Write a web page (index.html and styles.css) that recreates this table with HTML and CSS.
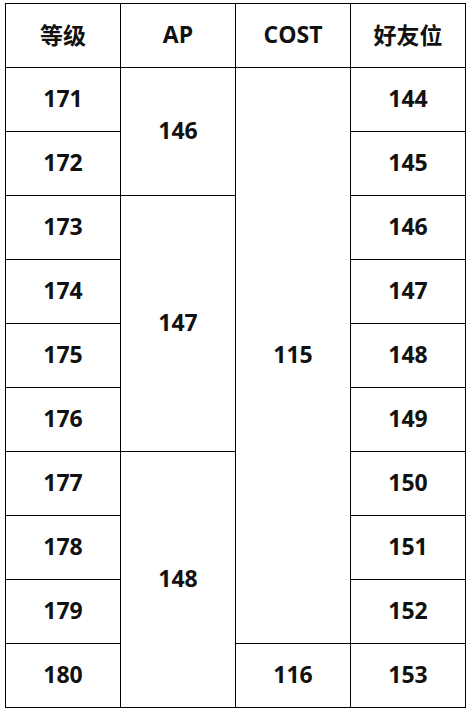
FILE: index.html
```html
<!DOCTYPE html>
<html lang="zh">
<head>
<meta charset="utf-8">
<title>等级表</title>
<link rel="stylesheet" href="styles.css">
</head>
<body>
<table class="grid">
  <colgroup><col class="c"><col class="c"><col class="c"><col class="c"></colgroup>
  <thead>
    <tr><th>等级</th><th>AP</th><th>COST</th><th>好友位</th></tr>
  </thead>
  <tbody>
    <tr><td>171</td><td rowspan="2">146</td><td rowspan="9">115</td><td>144</td></tr>
    <tr><td>172</td><td>145</td></tr>
    <tr><td>173</td><td rowspan="4">147</td><td>146</td></tr>
    <tr><td>174</td><td>147</td></tr>
    <tr><td>175</td><td>148</td></tr>
    <tr><td>176</td><td>149</td></tr>
    <tr><td>177</td><td rowspan="4">148</td><td>150</td></tr>
    <tr><td>178</td><td>151</td></tr>
    <tr><td>179</td><td>152</td></tr>
    <tr><td>180</td><td>116</td><td>153</td></tr>
  </tbody>
</table>
</body>
</html>
```
FILE: styles.css
```css
html, body {
  margin: 0;
  padding: 0;
  background: #ffffff;
}
body {
  padding: 3px 0 0 5px;
}
.grid {
  border-collapse: collapse;
  table-layout: fixed;
  width: 461px;
  font-family: "Open Sans", "Noto Sans CJK SC", sans-serif;
  font-weight: 700;
  font-size: 23px;
  color: #111111;
}
.grid .c {
  width: 115px;
}
.grid th, .grid td {
  border: 1.3px solid #000000;
  height: 60px;
  padding: 0 0 3px 0;
  text-align: center;
  vertical-align: middle;
  font-weight: 700;
}
.grid th {
  font-size: 23px;
}
```
